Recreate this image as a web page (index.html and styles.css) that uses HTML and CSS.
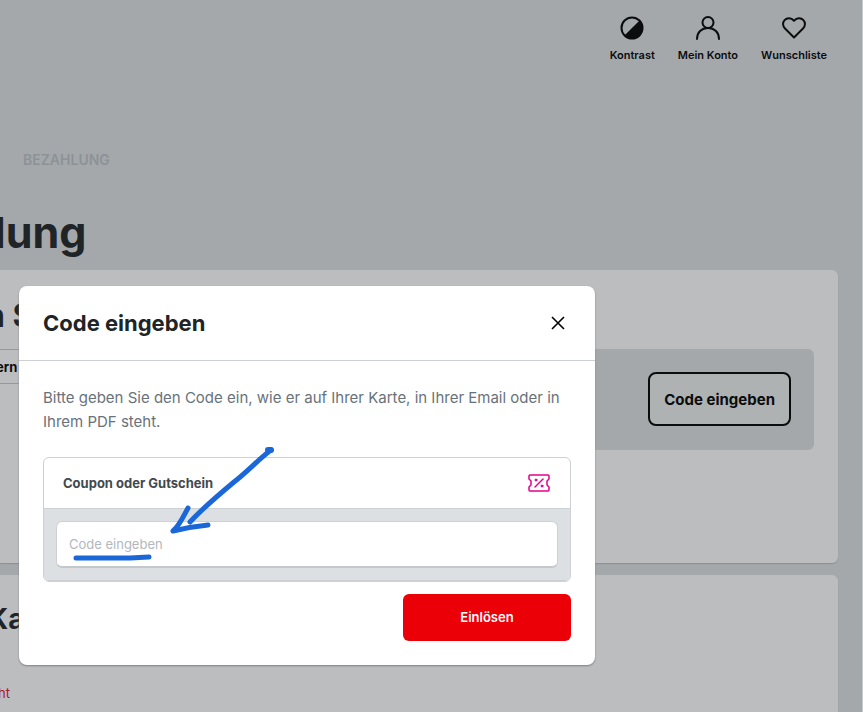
FILE: index.html
```
<!DOCTYPE html>
<html lang="de">
  <head>
    <meta charset="UTF-8" />
    <meta name="viewport" content="width=device-width, initial-scale=1.0" />
    <title>Code eingeben</title>
    <link rel="stylesheet" href="styles.css">
  </head>
  <body>
    <div class="page">
      <!-- Top navigation -->
      <nav class="top-nav">
        <a href="#" class="nav-item">
          <svg width="24" height="24" viewBox="0 0 24 24">
            <circle cx="12" cy="12" r="10.5" fill="none" stroke="currentColor" stroke-width="2" />
            <path d="M19.8 4.2A11 11 0 0 1 4.2 19.8Z" fill="currentColor" />
          </svg>
          Kontrast
        </a>
        <a href="#" class="nav-item">
          <svg width="24" height="24" viewBox="0 0 24 24" fill="none" stroke="currentColor" stroke-width="2" stroke-linecap="round">
            <circle cx="12" cy="6.5" r="5.5" />
            <path d="M1 23c0-6.500 4.500-11 11-11s11 4.500 11 11" />
          </svg>
          Mein Konto
        </a>
        <a href="#" class="nav-item">
          <svg width="24" height="24" viewBox="0 0 24 24" fill="none" stroke="currentColor" stroke-width="2" stroke-linejoin="round">
            <path d="M12 21.500L3 12.500C.5 10 .5 6.300 2.600 4.100C5 1.500 9 1.500 12 4.700C15 1.500 19 1.500 21.400 4.100C23.500 6.300 23.500 10 21 12.500Z" />
          </svg>
          Wunschliste
        </a>
      </nav>

      <div class="step">BEZAHLUNG</div>
      <h1>lung</h1>

      <section class="card card-code">
        <h2>n S</h2>
        <div class="code-row">
          <button type="button" class="tab">ern</button>
          <div class="code-panel">
            <button type="button" class="outline-button">Code eingeben</button>
          </div>
        </div>
      </section>

      <section class="card card-next">
        <h2>Ka</h2>
        <p class="error">ht</p>
      </section>
    </div>

    <!-- Code dialog -->
    <div class="dialog" role="dialog" aria-labelledby="dialog-title">
      <header class="dialog-header">
        <h2 id="dialog-title">Code eingeben</h2>
        <button type="button" class="close" aria-label="Schließen">
          <svg width="14" height="14" viewBox="0 0 14 14" fill="none" stroke="currentColor" stroke-width="1.600">
            <path d="M1 1l12 12M13 1L1 13" />
          </svg>
        </button>
      </header>
      <form class="dialog-body">
        <p>Bitte geben Sie den Code ein, wie er auf Ihrer Karte, in Ihrer Email oder in Ihrem PDF steht.</p>
        <div class="coupon">
          <div class="coupon-head">
            <label for="code">Coupon oder Gutschein</label>
            <svg class="ticket" width="22" height="18" viewBox="0 0 22 18" fill="none" stroke="currentColor" stroke-width="1.500" stroke-linecap="round" stroke-linejoin="round">
              <path d="M2 1H20Q21 1 21 2V5L19 7V11L21 13V16Q21 17 20 17H2Q1 17 1 16V13L3 11V7L1 5V2Q1 1 2 1Z" />
              <path d="M7 13L15 5" />
              <circle cx="8" cy="6" r="1" fill="currentColor" stroke-width="1" />
              <circle cx="14" cy="12" r="1" fill="currentColor" stroke-width="1" />
            </svg>
          </div>
          <div class="coupon-field">
            <input type="text" id="code" placeholder="Code eingeben" />
          </div>
        </div>
        <button type="submit" class="submit">Einlösen</button>
      </form>

      <!-- Hand-drawn marks -->
      <svg class="marks" width="210" height="120" viewBox="0 0 210 120" fill="none" stroke="currentColor" stroke-width="5" stroke-linecap="round" stroke-linejoin="round">
        <path d="M205 5C194 13 181 27 168 37C150 52 136 64 124 77" />
        <path d="M202 5H205" stroke-width="6" />
        <path d="M122 63C117 72 114 80 107 86C119 83 132 81 142 80" />
        <path d="M10 113H64L83 112" />
      </svg>
    </div>
  </body>
</html>
```
FILE: styles.css
```
* {
  box-sizing: border-box;
}

body {
  margin: 0;
  font-family: Inter, "Liberation Sans", sans-serif;
  color: #202427;
  background-color: #a4a8ab;
  overflow: hidden;
}

h1,
h2,
p {
  margin: 0;
}

button {
  font-family: inherit;
  cursor: pointer;
}

/* Dimmed page behind the dialog */
.page {
  height: 100vh;
  overflow: hidden;
  border-right: 1px solid #c3cccd;
}

.top-nav {
  display: flex;
  justify-content: flex-end;
  gap: 23px;
  padding: 16px 35px 0 0;
}

.nav-item {
  display: flex;
  flex-direction: column;
  align-items: center;
  gap: 7px;
  font-size: 11px;
  line-height: 16px;
  font-weight: 600;
  color: #0b0c0e;
  text-decoration: none;
}

.step {
  margin: 89px 0 0 23px;
  font-size: 14px;
  line-height: 16px;
  font-weight: 600;
  color: #8d9297;
}

h1 {
  margin: 36px 0 10px -6px;
  font-size: 43px;
  line-height: 56px;
  font-weight: 700;
}

.card {
  margin-right: 24px;
  background-color: #bcbdbf;
  border-radius: 0 6px 6px 0;
  box-shadow: 0 1px 1px #8b8f92;
}

.card h2 {
  font-size: 32px;
  line-height: 40px;
}

.card-code {
  min-height: 293px;
  padding: 26px 24px 0 0;
}

.card-code h2 {
  margin-left: -15px;
}

.code-row {
  display: flex;
  align-items: flex-start;
  margin-top: 13px;
}

.tab {
  width: 40px;
  height: 35px;
  padding: 0;
  border: 1px solid #96999c;
  border-width: 1px 0;
  background-color: #bcbdbf;
  font-size: 13px;
  font-weight: 700;
  color: #0b0c0e;
  text-align: left;
  text-indent: -4px;
}

.code-panel {
  flex: 1;
  display: flex;
  justify-content: flex-end;
  padding: 23px 23px 24px;
  background-color: #a4a8ab;
  border-radius: 6px;
}

.outline-button {
  height: 54px;
  padding: 0 14px;
  border: 2px solid #0b0c0e;
  border-radius: 8px;
  background-color: #aeb2b3;
  font-size: 15px;
  font-weight: 700;
  color: #0b0c0e;
}

.card-next {
  min-height: 160px;
  margin-top: 12px;
  padding-top: 24px;
}

.card-next h2 {
  margin-left: -12px;
  font-size: 28px;
}

.error {
  margin: 46px 0 0 -2px;
  font-size: 13px;
  line-height: 16px;
  color: #a5172a;
}

/* Dialog */
.dialog {
  position: absolute;
  top: 286px;
  left: 19px;
  width: 576px;
  max-width: calc(100% - 38px);
  background-color: #fff;
  border-radius: 8px;
  box-shadow: 0 1px 2px #7d8184;
}

.dialog-header {
  display: flex;
  justify-content: space-between;
  align-items: center;
  height: 75px;
  padding: 0 24px;
  border-bottom: 1px solid #cdd0d5;
}

.dialog-header h2 {
  font-size: 22px;
  line-height: 32px;
  font-weight: 700;
}

.close {
  display: flex;
  padding: 6px;
  border: none;
  background: none;
  color: #000;
}

.dialog-body {
  display: flex;
  flex-direction: column;
  padding: 25px 24px 24px;
}

.dialog-body p {
  font-size: 15px;
  line-height: 24px;
  color: #68727b;
}

.coupon {
  margin: 23px 0 12px;
  border: 1px solid #cdd0d5;
  border-radius: 6px;
  overflow: hidden;
}

.coupon-head {
  display: flex;
  justify-content: space-between;
  align-items: center;
  height: 51px;
  padding: 0 20px 0 19px;
  border-bottom: 1px solid #cdd0d5;
  font-size: 13px;
  font-weight: 700;
  color: #42494f;
}

.ticket {
  color: #e2008a;
}

.coupon-field {
  padding: 12px;
  background-color: #dce0e3;
  border-bottom: 1px solid #cdd0d5;
}

.coupon-field input {
  display: block;
  width: 100%;
  height: 47px;
  padding: 0 12px;
  border: 1px solid #cdd0d5;
  border-bottom: 2px solid #c3c8cc;
  border-radius: 6px;
  background-color: #fff;
  font-family: inherit;
  font-size: 13px;
  color: #42494f;
}

.coupon-field input::placeholder {
  color: #b2b8be;
}

.submit {
  align-self: flex-end;
  width: 168px;
  height: 47px;
  padding: 0 0 2px;
  border: none;
  border-radius: 6px;
  background-color: #eb0008;
  font-size: 13px;
  font-weight: 600;
  color: #fff;
}

.marks {
  position: absolute;
  top: 159px;
  left: 47px;
  color: #1967d8;
  pointer-events: none;
}
```
